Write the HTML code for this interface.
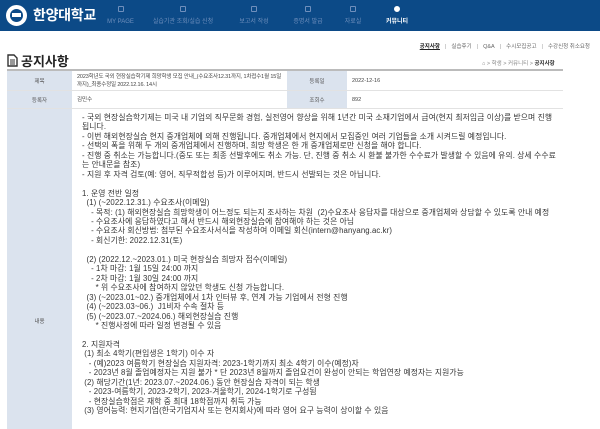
<!DOCTYPE html>
<html><head><meta charset="utf-8"><style>
*{margin:0;padding:0;box-sizing:border-box}
body{width:600px;height:414px;overflow:hidden;background:#fff;font-family:"Liberation Sans","Noto Sans CJK KR",sans-serif;color:#333;position:relative}
.hd{position:absolute;left:0;top:0;width:600px;height:31px;background:#0c4a87}
.logo{position:absolute;left:6px;top:5px;width:21px;height:21px;border-radius:50%;background:#fff;border:2px solid #fff}
.logo i{position:absolute;left:2px;top:2px;width:13px;height:13px;border-radius:50%;background:#0c4a87}
.logo b{position:absolute;left:4px;top:6px;width:9px;height:4px;background:#fff}
.brand{position:absolute;left:33px;top:6px;font-size:14px;font-weight:bold;color:#fff;font-family:"Noto Sans CJK KR",sans-serif;line-height:18px;letter-spacing:-0.3px}
.nv{position:absolute;top:6px;font-size:6px;color:#6f8fbc;text-align:center;line-height:8px}
.nv span{display:block;width:6px;height:6px;margin:0 auto 6px;border:1px solid #6f8fbc;border-radius:1px}
.nv.on{color:#fff;font-weight:bold}
.nv.on span{border-color:#fff;border-radius:50%;background:#fff}
.sub{position:absolute;top:42px;right:10px;font-size:5.5px;color:#666;white-space:nowrap}
.sub b{color:#222;text-decoration:underline}
.sub em{font-style:normal;color:#999;margin:0 5px}
.tt{position:absolute;left:7px;top:53px;font-size:13px;font-weight:bold;color:#222;font-family:"Noto Sans CJK KR",sans-serif;line-height:16px}
.tt svg{vertical-align:-1px;margin-right:3px}
.bc{position:absolute;top:59px;left:482px;font-size:5.5px;color:#888;white-space:nowrap}
.bc b{color:#333}
.tb{position:absolute;left:7px;top:69px;width:556px;border-top:2px solid #bbb}
.r{display:flex;border-bottom:1px solid #e2e2e2;font-size:5.5px;color:#444}
.l{background:#dbe3ee;text-align:center;display:flex;align-items:center;justify-content:center;color:#555}
.v{padding:0 5px;display:flex;align-items:center;line-height:8px}
.ct{font-size:7.8px;line-height:9.45px;color:#333;padding-top:4px;white-space:pre;letter-spacing:0.1px}
</style></head><body>
<div class="hd">
<div class="logo"><i></i><b></b></div>
<div class="brand">한양대학교</div>
<div class="nv" style="left:107px;width:27px"><span></span>MY PAGE</div>
<div class="nv" style="left:152px;width:62px"><span></span>실습기관 조회/실습 신청</div>
<div class="nv" style="left:236px;width:36px"><span></span>보고서 작성</div>
<div class="nv" style="left:290px;width:36px"><span></span>증명서 발급</div>
<div class="nv" style="left:341px;width:24px"><span></span>자료실</div>
<div class="nv on" style="left:382px;width:30px"><span></span>커뮤니티</div>
</div>
<div class="sub"><b>공지사항</b><em>|</em>실습후기<em>|</em>Q&amp;A<em>|</em>수시모집공고<em>|</em>수강신청 취소요청</div>
<div class="tt"><svg width="11" height="13" viewBox="0 0 11 13"><path d="M1 1H7L10 4V12H1Z" fill="none" stroke="#333" stroke-width="1.4"/><path d="M3 6H8M3 8H8M3 10H8" stroke="#333" stroke-width="1"/></svg>공지사항</div>
<div class="bc">⌂ &gt; 학생 &gt; 커뮤니티 &gt; <b>공지사항</b></div>
<div class="tb">
<div class="r" style="height:20px"><div class="l" style="width:65px">제목</div><div class="v" style="width:215px;letter-spacing:-0.15px">2023학년도 국외 현장실습학기제 희망학생 모집 안내_(수요조사12.31까지, 1차접수1월 15일<br>까지)_최종수정일 2022.12.16. 14시</div><div class="l" style="width:60px">등록일</div><div class="v">2022-12-16</div></div>
<div class="r" style="height:18px"><div class="l" style="width:65px">등록자</div><div class="v" style="width:215px">김민수</div><div class="l" style="width:60px">조회수</div><div class="v">892</div></div>
<div class="r" style="height:320px;border:0"><div class="l" style="width:65px;align-items:flex-start;padding-top:208px">내용</div><div class="ct" style="padding-left:10px">- 국외 현장실습학기제는 미국 내 기업의 직무문화 경험, 실전영어 향상을 위해 1년간 미국 소재기업에서 급여(현지 최저임금 이상)를 받으며 진행
됩니다.
- 이번 해외현장실습 현지 중개업체에 의해 진행됩니다. 중개업체에서 현지에서 모집중인 여러 기업들을 소개 시켜드릴 예정입니다.
- 선택의 폭을 위해 두 개의 중개업체에서 진행하며, 희망 학생은 한 개 중개업체로만 신청을 해야 합니다.
- 진행 중 취소는 가능합니다.(중도 또는 최종 선발후에도 취소 가능. 단, 진행 중 취소 시 환불 불가한 수수료가 발생할 수 있음에 유의. 상세 수수료
는 안내문을 참조)
- 지원 후 자격 검토(예: 영어, 직무적합성 등)가 이루어지며, 반드시 선발되는 것은 아닙니다.

1. 운영 전반 일정
  (1) (~2022.12.31.) 수요조사(이메일)
    - 목적: (1) 해외현장실습 희망학생이 어느정도 되는지 조사하는 차원  (2)수요조사 응답자를 대상으로 중개업체와 상담할 수 있도록 안내 예정
    - 수요조사에 응답하였다고 해서 반드시 해외현장실습에 참여해야 하는 것은 아님
    - 수요조사 회신방법: 첨부된 수요조사서식을 작성하여 이메일 회신(intern@hanyang.ac.kr)
    - 회신기한: 2022.12.31(토)

  (2) (2022.12.~2023.01.) 미국 현장실습 희망자 접수(이메일)
    - 1차 마감: 1월 15일 24:00 까지
    - 2차 마감: 1월 30일 24:00 까지
      * 위 수요조사에 참여하지 않았던 학생도 신청 가능합니다.
  (3) (~2023.01~02.) 중개업체에서 1차 인터뷰 후, 연계 가능 기업에서 전형 진행
  (4) (~2023.03~06.)  J1비자 수속 절차 등
  (5) (~2023.07.~2024.06.) 해외현장실습 진행
      * 진행사정에 따라 일정 변경될 수 있음

2. 지원자격
 (1) 최소 4학기(편입생은 1학기) 이수 자
   - (예)2023 여름학기 현장실습 지원자격: 2023-1학기까지 최소 4학기 이수(예정)자
   - 2023년 8월 졸업예정자는 지원 불가 * 단 2023년 8월까지 졸업요건이 완성이 안되는 학업연장 예정자는 지원가능
 (2) 해당기간(1년: 2023.07.~2024.06.) 동안 현장실습 자격이 되는 학생
   - 2023-여름학기, 2023-2학기, 2023-겨울학기, 2024-1학기로 구성됨
   - 현장실습학점은 재학 중 최대 18학점까지 취득 가능
 (3) 영어능력: 현지기업(한국기업지사 또는 현지회사)에 따라 영어 요구 능력이 상이할 수 있음</div></div>
</div>
</body></html>
